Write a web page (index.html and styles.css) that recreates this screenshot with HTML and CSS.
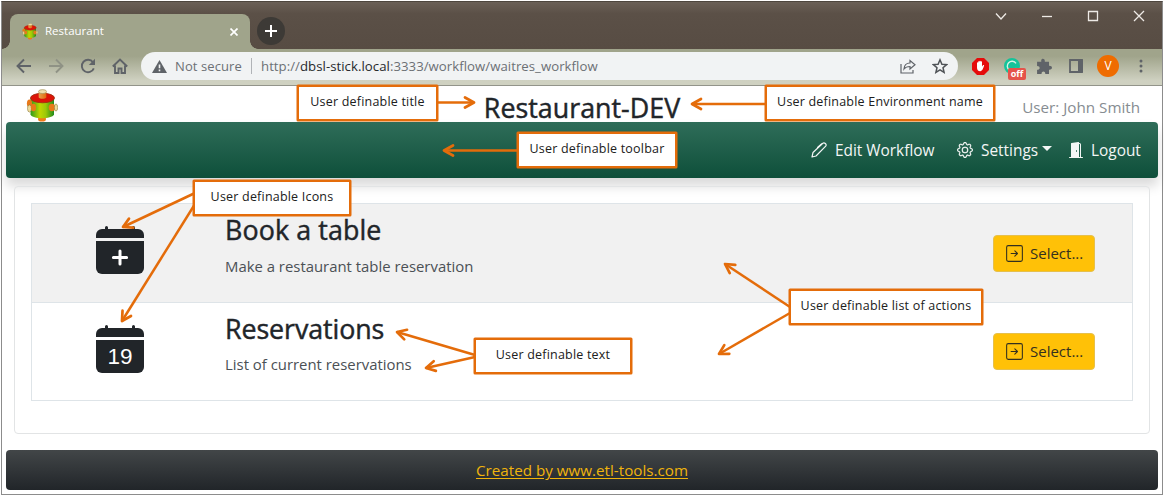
FILE: index.html
```html
<!DOCTYPE html>
<html lang="en">
<head>
<meta charset="utf-8">
<title>Restaurant</title>
<link rel="stylesheet" href="styles.css">
</head>
<body>
<svg width="0" height="0" class="defs">
  <defs>
    <linearGradient id="potBody"><stop offset="0" stop-color="#2c9a1c"/><stop offset=".4" stop-color="#c0d600"/><stop offset=".65" stop-color="#9cc808"/><stop offset="1" stop-color="#1f8a1c"/></linearGradient>
    <linearGradient id="potKnob"><stop offset="0" stop-color="#e8a04a"/><stop offset="1" stop-color="#e06a10"/></linearGradient>
    <symbol id="pot" viewBox="0 0 32 33">
      <ellipse cx="16" cy="30" rx="4" ry="2.6" fill="#f07a18"/>
      <path d="M4.500 9v16.500c2 5 21 5 23.500 0V9z" fill="url(#potBody)"/>
      <ellipse cx="3.500" cy="14.500" rx="2.600" ry="4" fill="#e87818"/>
      <ellipse cx="3.500" cy="19.500" rx="2" ry="3.600" fill="#eedc9c" stroke="#8a7a3c" stroke-width=".6"/>
      <ellipse cx="7.500" cy="18.500" rx="2.600" ry="3.800" fill="#e87a18"/>
      <ellipse cx="26" cy="18.500" rx="3.300" ry="3.800" fill="#e87a18"/>
      <ellipse cx="30" cy="18.500" rx="1.600" ry="3.600" fill="#eedc9c" stroke="#8a7a3c" stroke-width=".6"/>
      <ellipse cx="16.500" cy="9" rx="12" ry="4.800" fill="#dc1408" stroke="#9a3010" stroke-width=".8"/>
      <path d="M12.700 3v5.500c1 1.800 6.600 1.800 7.600 0V3z" fill="url(#potKnob)"/>
      <ellipse cx="16.500" cy="2.600" rx="4" ry="2" fill="#eedfae" stroke="#9a8a50" stroke-width=".6"/>
    </symbol>
    <symbol id="select" viewBox="0 0 16 16">
      <rect x=".6" y=".6" width="14.800" height="14.800" rx="1.500" fill="none" stroke="currentColor"/>
      <path d="M4.800 8h6M8.300 5.500 10.800 8l-2.500 2.500" fill="none" stroke="currentColor" stroke-linecap="round" stroke-linejoin="round"/>
    </symbol>
  </defs>
</svg>
<div class="window">
  <div class="tabstrip">
    <div class="tab">
      <svg class="favicon"><use href="#pot"/></svg>
      <span class="tab-name">Restaurant</span>
      <svg class="tab-close" viewBox="0 0 8 8"><path d="M.5.5l7 7M7.500.5l-7 7"/></svg>
    </div>
    <div class="new-tab"><svg viewBox="0 0 12 12"><path d="M6 0v12M0 6h12"/></svg></div>
    <div class="win-controls">
      <svg viewBox="0 0 12 12"><path d="M1 3.500l5 5.500 5-5.500"/></svg>
      <svg viewBox="0 0 12 12"><path d="M1 6.500h10"/></svg>
      <svg viewBox="0 0 12 12"><path d="M1.500 1.500h9v9h-9z"/></svg>
      <svg viewBox="0 0 12 12"><path d="M1 1l10 10M11 1L1 11"/></svg>
    </div>
  </div>
  <div class="toolbar">
    <div class="nav-buttons">
      <svg viewBox="0 0 16 16"><path d="M15 8H2M8 1.500 1.500 8 8 14.500"/></svg>
      <svg class="dim" viewBox="0 0 16 16"><path d="M1 8h13M8 1.500 14.500 8 8 14.500"/></svg>
      <svg viewBox="0 0 16 16"><path d="M13.800 10.300A6.200 6.200 0 1 1 13 4.200"/><path class="solid" d="M15 .8v6.200H8.800z"/></svg>
      <svg viewBox="0 0 16 16"><path d="M.8 8.500 8 1.500l7.200 7M3 7.500V15h3.500v-4.500h3V15H13V7.500"/></svg>
    </div>
    <div class="address">
      <svg class="warn" viewBox="0 0 15 13"><path fill="#5f6368" d="M7.500 0 15 13H0z"/><path stroke="#f1f3f4" stroke-width="1.600" d="M7.500 4.500v3.800M7.500 9.600v1.600"/></svg>
      <span class="not-secure">Not secure</span>
      <span class="divider"></span>
      <span class="url">http://<b>dbsl-stick.local</b>:3333/workflow/waitres_workflow</span>
      <svg class="share" viewBox="0 0 16 15"><path d="M1 5v9h12v-3M4 10c.3-4 2.500-6 6-6V1.500L15 5.800 10 10V7.500C7.500 7.500 5.500 8 4 10z"/></svg>
      <svg class="star" viewBox="0 0 16 16"><path d="m8 1.800 1.900 4.400 4.700.4L11 9.700l1.100 4.700L8 11.900l-4.100 2.500L5 9.700 1.400 6.600l4.700-.4z"/></svg>
    </div>
    <div class="extensions">
      <svg class="ext-block" viewBox="0 0 18 18"><path fill="#e50b0b" d="M5.300 0h7.400L18 5.300v7.400L12.700 18H5.300L0 12.700V5.300z"/><path fill="#fff" d="M5.300 8V5.200c0-.9 1.200-.9 1.200 0V4c0-.9 1.300-.9 1.300 0v-.5c0-.9 1.400-.9 1.400 0V4c0-.9 1.400-.9 1.400 0v5l1-1.200c.6-.6 1.500-.2 1.200.5-.8 2.200-1.700 5.700-4 5.700C6.300 14 5.300 12.500 5.300 10z"/></svg>
      <div class="grammar">
        <svg viewBox="0 0 16 16"><circle cx="8" cy="8" r="8" fill="#15c39a"/><path d="M12 5.300A4.800 4.800 0 1 0 12.500 10" fill="none" stroke="#d8f3e6" stroke-width="1.400"/></svg>
        <span class="off">off</span>
      </div>
      <svg class="puzzle" viewBox="0 0 15 15"><path fill="#5f6368" d="M1 3.500h4c-1-3.700 4-3.700 3.200 0h4v3.700c3.700-.3 3.700 4 0 3.700V15H8.700c.2-3.200-3.600-3.200-3.500 0H1v-4c3.200 0 3.200-3.500 0-3.400z"/></svg>
      <svg class="panel" viewBox="0 0 14 14"><path fill="none" stroke="#5f6368" stroke-width="1.800" d="M1 1h12v12H1z"/><path fill="#5f6368" d="M9 1h5v12H9z"/></svg>
      <span class="avatar">V</span>
      <svg class="dots" viewBox="0 0 4 14"><circle cx="2" cy="2" r="1.500"/><circle cx="2" cy="7" r="1.500"/><circle cx="2" cy="12" r="1.500"/></svg>
    </div>
  </div>
  <main class="page">
    <header class="header">
      <svg class="logo"><use href="#pot"/></svg>
      <h1>Restaurant-DEV</h1>
      <span class="user">User: John Smith</span>
    </header>
    <nav class="navbar">
      <span class="nav-item edit"><svg viewBox="0 0 16 16" fill="none" stroke="currentColor" stroke-width="1.200" stroke-linejoin="round" stroke-linecap="round"><path d="M1 15l1-4.500L11.800 1.300c1.500-1.500 4.300 1 2.900 2.900L5 14z"/><path d="M10.500 2 6.500 5.500"/></svg>Edit Workflow</span>
      <span class="nav-item settings"><svg viewBox="0 0 16 16" fill="currentColor" stroke="currentColor" stroke-width=".2"><path d="M8 4.754a3.246 3.246 0 1 0 0 6.492 3.246 3.246 0 0 0 0-6.492zM5.754 8a2.246 2.246 0 1 1 4.492 0 2.246 2.246 0 0 1-4.492 0z"/><path d="M9.796 1.343c-.527-1.790-3.065-1.790-3.592 0l-.094.319a.873.873 0 0 1-1.255.52l-.292-.16c-1.640-.892-3.433.902-2.540 2.541l.159.292a.873.873 0 0 1-.52 1.255l-.319.094c-1.790.527-1.790 3.065 0 3.592l.319.094a.873.873 0 0 1 .52 1.255l-.16.292c-.892 1.640.901 3.434 2.541 2.540l.292-.159a.873.873 0 0 1 1.255.52l.094.319c.527 1.790 3.065 1.790 3.592 0l.094-.319a.873.873 0 0 1 1.255-.52l.292.16c1.640.893 3.434-.902 2.540-2.541l-.159-.292a.873.873 0 0 1 .52-1.255l.319-.094c1.790-.527 1.790-3.065 0-3.592l-.319-.094a.873.873 0 0 1-.52-1.255l.16-.292c.893-1.640-.902-3.433-2.541-2.540l-.292.159a.873.873 0 0 1-1.255-.52l-.094-.319zm-2.633.283c.246-.835 1.428-.835 1.674 0l.094.319a1.873 1.873 0 0 0 2.693 1.115l.291-.16c.764-.415 1.600.42 1.184 1.185l-.159.292a1.873 1.873 0 0 0 1.116 2.692l.318.094c.835.246.835 1.428 0 1.674l-.319.094a1.873 1.873 0 0 0-1.115 2.693l.16.291c.415.764-.42 1.600-1.185 1.184l-.291-.159a1.873 1.873 0 0 0-2.693 1.116l-.094.318c-.246.835-1.428.835-1.674 0l-.094-.319a1.873 1.873 0 0 0-2.692-1.115l-.292.16c-.764.415-1.600-.42-1.184-1.185l.159-.291A1.873 1.873 0 0 0 1.945 8.930l-.319-.094c-.835-.246-.835-1.428 0-1.674l.319-.094A1.873 1.873 0 0 0 3.060 4.377l-.16-.292c-.415-.764.42-1.600 1.185-1.184l.292.159a1.873 1.873 0 0 0 2.692-1.115l.094-.319z"/></svg>Settings<i class="caret"></i></span>
      <span class="nav-item logout"><svg viewBox="0 0 16 16" fill="currentColor"><path d="M1.500 15a.5.500 0 0 0 0 1h13a.5.500 0 0 0 0-1H13V2.500A1.500 1.500 0 0 0 11.500 1H11V.5a.5.500 0 0 0-.57-.495l-7 1A.5.500 0 0 0 3 1.500V15H1.500zM11 2h.5a.5.500 0 0 1 .5.500V15h-1V2zm-2.500 8c-.276 0-.5-.448-.5-1s.224-1 .5-1 .5.448.5 1-.224 1-.5 1z"/></svg>Logout</span>
    </nav>
    <section class="card">
      <div class="actions">
        <article class="action shaded">
          <svg class="cal" viewBox="0 0 16 16"><path d="M4 .5a.5.500 0 0 0-1 0V1H2a2 2 0 0 0-2 2v1h16V3a2 2 0 0 0-2-2h-1V.5a.5.500 0 0 0-1 0V1H4z"/><path d="M0 5v9a2 2 0 0 0 2 2h12a2 2 0 0 0 2-2V5z"/><path class="plus" d="M8 8.300v4.400M5.800 10.500h4.400"/></svg>
          <div class="text"><h2 class="t-book">Book a table</h2><p>Make a restaurant table reservation</p></div>
          <button class="select"><svg><use href="#select"/></svg>Select...</button>
        </article>
        <article class="action plain">
          <svg class="cal" viewBox="0 0 16 16"><path d="M4 .5a.5.500 0 0 0-1 0V1H2a2 2 0 0 0-2 2v1h16V3a2 2 0 0 0-2-2h-1V.5a.5.500 0 0 0-1 0V1H4z"/><path d="M0 5v9a2 2 0 0 0 2 2h12a2 2 0 0 0 2-2V5z"/><text x="8" y="13" text-anchor="middle">19</text></svg>
          <div class="text"><h2>Reservations</h2><p>List of current reservations</p></div>
          <button class="select"><svg><use href="#select"/></svg>Select...</button>
        </article>
      </div>
    </section>
    <footer class="footer"><a>Created by www.etl-tools.com</a></footer>
  </main>
</div>

<svg class="arrows" viewBox="0 0 1164 496">
  <defs><marker id="head" viewBox="-11 -7 13 14" markerWidth="13" markerHeight="14" refX="0" refY="0" orient="auto" markerUnits="userSpaceOnUse"><path d="M-9-5 0 0-9 5" fill="none" stroke="#e46c0a" stroke-width="2.700" stroke-linecap="round" stroke-linejoin="round"/></marker></defs>
  <path d="M438 102.500H474"/>
  <path d="M766 104H692"/>
  <path d="M518 150.500H444"/>
  <path d="M195 193 123 227"/>
  <path d="M195 204 122 321"/>
  <path d="M790 307 725 264"/>
  <path d="M790 313 719 354"/>
  <path d="M475 355 397 332"/>
  <path d="M475 357 426 368"/>
</svg>
<div class="callout c-title">User definable title</div>
<div class="callout c-env">User definable Environment name</div>
<div class="callout c-toolbar">User definable toolbar</div>
<div class="callout c-icons">User definable Icons</div>
<div class="callout c-list">User definable list of actions</div>
<div class="callout c-text">User definable text</div>
</body>
</html>
```

FILE: styles.css
```css
* { box-sizing: border-box; }
body {
  margin: 0;
  position: relative;
  width: 1164px;
  height: 496px;
  overflow: hidden;
  background: #fff;
  font-family: "Open Sans", "Noto Sans", sans-serif;
  color: #212529;
}
.defs { position: absolute; }
svg { flex: none; }

/* Browser window */
.window {
  display: flex;
  flex-direction: column;
  margin: 1px 1px 0;
  width: 1162px;
  height: 494px;
  border: 1px solid #8c8c8c;
  border-top-color: #4d463e;
}
.tabstrip {
  display: flex;
  height: 47px;
  padding: 12px 17px 0 8px;
  background: linear-gradient(#6a6057, #5b5047 25%, #574c43);
}
.tab {
  display: flex;
  align-items: center;
  position: relative;
  width: 240px;
  height: 35px;
  padding: 0 12px;
  border-radius: 8px 8px 0 0;
  background: #a0a48b;
  color: #fff;
}
.tab::before, .tab::after {
  content: "";
  position: absolute;
  bottom: 0;
  width: 8px;
  height: 8px;
}
.tab::before { left: -8px; background: radial-gradient(circle at 0 0, transparent 7.5px, #a0a48b 8px); }
.tab::after { right: -8px; background: radial-gradient(circle at 100% 0, transparent 7.5px, #a0a48b 8px); }
.favicon { width: 16px; height: 17px; }
.tab-name { margin: -2px 0 0 7px; flex: 1; font-size: 11.500px; }
.tab-close { width: 8px; height: 8px; fill: none; stroke: #fff; stroke-width: 1.700; }
.new-tab {
  display: grid;
  place-items: center;
  width: 28px;
  height: 28px;
  margin: 3px 0 0 7px;
  border-radius: 50%;
  background: #3d3a36;
}
.new-tab svg { width: 12px; height: 12px; stroke: #fff; stroke-width: 2; }
.win-controls { display: flex; gap: 34px; margin: -4px 0 0 auto; }
.win-controls svg { width: 12px; height: 12px; fill: none; stroke: #eeeae6; stroke-width: 1.300; }

.toolbar {
  display: flex;
  align-items: center;
  height: 37px;
  padding: 0 19px 2px 14px;
  background: linear-gradient(#a0a48b 20%, #cfd1c1 88%);
  border-bottom: 1px solid #92948a;
}
.nav-buttons { display: flex; gap: 16px; width: 125px; }
.nav-buttons svg { width: 16px; height: 16px; fill: none; stroke: #5f6368; stroke-width: 1.900; }
.nav-buttons .dim { stroke: #8f9285; }
.nav-buttons .solid { fill: #5f6368; stroke: none; }
.address {
  display: flex;
  align-items: center;
  width: 817px;
  height: 28px;
  padding: 0 10px 0 11px;
  border-radius: 14px;
  background: #f1f3f4;
  color: #6c7074;
  font-size: 13px;
}
.warn { width: 15px; height: 13px; }
.not-secure { width: 67px; margin-left: 8px; letter-spacing: .1px; white-space: nowrap; }
.divider { width: 1px; height: 16px; margin: 0 9px; background: #b0b3b7; }
.url { flex: 1; font-size: 13.200px; letter-spacing: .04px; }
.url b { font-weight: 400; color: #26292c; }
.share { width: 16px; height: 15px; margin-right: 16px; fill: none; stroke: #5f6368; stroke-width: 1.200; }
.star { width: 16px; height: 16px; fill: none; stroke: #4f5357; stroke-width: 1.500; }
.extensions { display: flex; align-items: center; flex: 1; padding-left: 14px; }
.ext-block { width: 17px; height: 17px; margin-right: 15px; }
.grammar { position: relative; width: 17px; height: 17px; margin-right: 15px; }
.grammar svg { display: block; width: 16px; height: 16px; }
.off {
  position: absolute;
  left: 4px;
  top: 10px;
  width: 18px;
  height: 12px;
  border-radius: 2px;
  background: #e5534b;
  color: #fff;
  font-size: 9px;
  font-weight: 700;
  line-height: 12px;
  text-align: center;
}
.puzzle { width: 16px; height: 16px; margin-right: 17px; }
.panel { width: 14px; height: 14px; margin-right: 14px; }
.avatar {
  width: 22px;
  height: 22px;
  border-radius: 50%;
  background: #ef6c00;
  color: #fff;
  font-size: 12px;
  line-height: 22px;
  text-align: center;
}
.dots { width: 4px; height: 14px; margin-left: auto; fill: #5f6368; }

/* Application page */
.page { flex: 1; padding: 0 4px; }
.header {
  display: grid;
  grid-template-columns: 1fr auto 1fr;
  height: 36px;
  padding: 0 18px;
}
.logo { width: 32px; height: 33px; margin: 3px 0 0 2px; }
h1, h2 { font-size: 26.800px; font-weight: 500; white-space: nowrap; -webkit-text-stroke: .45px currentColor; }
h1 { margin: 0; line-height: 43px; letter-spacing: .02px; }
.user { justify-self: end; color: #868c91; font-size: 15.200px; line-height: 42px; white-space: nowrap; }
.navbar {
  display: flex;
  justify-content: flex-end;
  align-items: center;
  height: 56px;
  padding: 0 14px 0 0;
  border-radius: 4px;
  background: linear-gradient(#2f6d59, #0e4f3a);
  box-shadow: 0 8px 12px rgba(0, 0, 0, .15);
  color: #f3f6f5;
  font-size: 15.400px;
}
.nav-item { display: flex; align-items: center; height: 56px; white-space: nowrap; }
.nav-item svg { width: 16px; height: 16px; margin-right: 8px; }
.edit { width: 146px; }
.settings { width: 111px; }
.logout { width: 76px; }
.logout svg { margin-right: 7px; }
.caret { margin: -4px 0 0 4px; border: 5px solid transparent; border-top-color: currentColor; border-bottom: 0; }
.card {
  height: 248px;
  margin: 8px 8px 16px;
  padding: 16px;
  border: 1px solid #e2e4e5;
  border-radius: 4px;
}
.actions { border: 1px solid #dee4e8; }
.action { display: flex; height: 97px; padding: 0 37px 0 64px; }
.shaded { height: 99px; background: #f1f1f1; border-bottom: 1px solid #dee4e8; }
.cal { width: 48px; height: 48px; margin: 22px 81px 0 0; fill: #212529; }
.cal .plus { fill: none; stroke: #fff; stroke-width: 1; stroke-linecap: round; }
.cal text { fill: #fff; font: 7.500px "Liberation Sans", sans-serif; }
.text { flex: 1; }
h2 { margin: 7px 0 0; line-height: 38px; }
.t-book { letter-spacing: .12px; }
p { margin: 7px 0 0; color: #4b5055; font-size: 14.900px; line-height: 20px; white-space: nowrap; }
.plain h2 { letter-spacing: -.08px; }
.plain p { margin-top: 6px; }
.select {
  display: flex;
  align-items: center;
  width: 102px;
  height: 37px;
  margin: 31px 0 0;
  padding: 0 12px 1px;
  border: 1px solid #e6c04c;
  border-radius: 4px;
  background: #ffc107;
  color: #33301f;
  font: 15px "Open Sans", sans-serif;
}
.plain .select { margin-top: 30px; }
.select svg { width: 17px; height: 17px; margin-right: 7px; }
.footer {
  display: grid;
  place-items: center;
  height: 40px;
  border-radius: 4px;
  background: linear-gradient(#424648, #212529);
}
.footer a { color: #f0b40c; font-size: 15.200px; text-decoration: underline; text-underline-offset: 2px; }

/* Annotations over the window */
.arrows { position: absolute; inset: 0; width: 1164px; height: 496px; fill: none; stroke: #e46c0a; stroke-width: 2.500; }
.arrows > path { marker-end: url(#head); }
.callout {
  position: absolute;
  height: 36px;
  border: 2px solid #e46c0a;
  border-radius: 1px;
  box-shadow: 0 0 0 .5px #e46c0a;
  background: #fff;
  color: #202020;
  font-size: 12.500px;
  letter-spacing: .2px;
  line-height: 29px;
  text-align: center;
  white-space: nowrap;
}
.c-title { left: 297px; top: 85px; width: 141px; }
.c-env { left: 765px; top: 85px; width: 230px; }
.c-toolbar { left: 517px; top: 132px; width: 160px; }
.c-icons { left: 193px; top: 180px; width: 158px; }
.c-list { left: 789px; top: 289px; width: 194px; }
.c-text { left: 474px; top: 338px; width: 158px; }
```
